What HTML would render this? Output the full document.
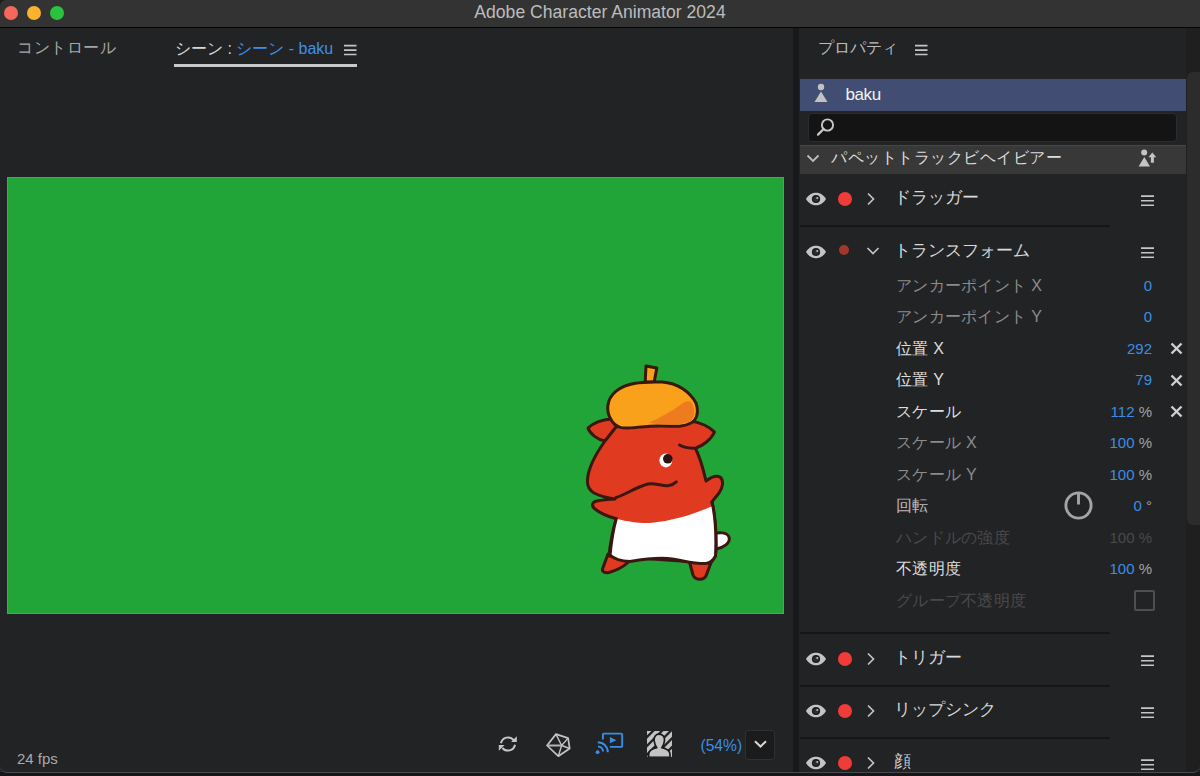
<!DOCTYPE html>
<html lang="ja">
<head>
<meta charset="utf-8">
<style>
*{box-sizing:border-box;margin:0;padding:0}
html,body{width:1200px;height:776px;overflow:hidden;background:#1c1c1e}
body{position:relative;font-family:"Liberation Sans",sans-serif;color:#c8c8c8}
.abs{position:absolute}
#titlebar{left:0;top:0;width:1200px;height:28px;background:#333333;border-bottom:1px solid #060606;border-radius:6px 0 0 0}
#title{left:0;top:0.5px;width:1200px;text-align:center;font-size:17.6px;color:#bcbcbc;line-height:22px}
.tl{top:5.5px;width:14px;height:14px;border-radius:50%}
#left{left:0;top:28px;width:793px;height:745px;background:#222325}
#divider{left:793px;top:28px;width:6px;height:748px;background:#19191a}
#right{left:799px;top:28px;width:387px;height:744px;background:#222325}
#sbtrack{left:1186px;top:28px;width:14px;height:748px;background:#1f1f20}
#sbthumb{left:1187px;top:72px;width:13px;height:453px;background:#2c2c2d;border-radius:6px 0 0 6px}
.tab{font-size:16px;white-space:nowrap}
.ham{width:12px;height:11px}
.ham i{position:absolute;left:0;width:12px;height:1.6px;background:#c6c6c6}
#canvas{left:7px;top:177px;width:777px;height:437px;background:#22a538;box-shadow:inset 1px 1px 0 #31b646,inset -1px -1px 0 #33b848}

.plab{left:896px;font-size:16px;letter-spacing:0.3px;white-space:nowrap;line-height:20px}
.pval{right:48px;font-size:15px;white-space:nowrap;line-height:20px;text-align:right}
.gtitle{left:894px;font-size:16.5px;color:#d9d9d9;white-space:nowrap;line-height:20px}
.sep{left:800px;width:310px;height:2px;background:#161617}
</style>
</head>
<body>
<div id="titlebar" class="abs"></div>
<div class="abs tl" style="left:4px;background:#f5695c"></div>
<div class="abs tl" style="left:27px;background:#fbb22e"></div>
<div class="abs tl" style="left:49.5px;background:#2ac23f"></div>
<div id="title" class="abs">Adobe Character Animator 2024</div>

<div id="left" class="abs"></div>
<div id="divider" class="abs"></div>
<div id="right" class="abs"></div>
<div id="sbtrack" class="abs"></div>
<div id="sbthumb" class="abs"></div>

<!-- left tabs -->
<div class="abs tab" style="left:17px;top:38px;color:#a6a6a6;letter-spacing:0.5px">コントロール</div>
<div class="abs tab" style="left:175px;top:39px;color:#d6d6d6">シーン : <span style="color:#3f8fe6">シーン - baku</span></div>
<svg class="abs" style="left:343.8px;top:40px" width="13" height="20" viewBox="0 0 13 20"><path d="M0 5.6H12.5M0 10.1H12.5M0 14.5H12.5" stroke="#c6c6c6" stroke-width="1.6"/></svg>
<div class="abs" style="left:174px;top:64px;width:183px;height:3px;background:#c9c9c9"></div>

<div id="canvas" class="abs"></div>


<!-- right panel header -->
<div class="abs tab" style="left:818px;top:38px;color:#bdbdbd">プロパティ</div>
<svg class="abs" style="left:914.5px;top:40px" width="13" height="20" viewBox="0 0 13 20"><path d="M0 5.6H12.5M0 10.1H12.5M0 14.5H12.5" stroke="#c6c6c6" stroke-width="1.6"/></svg>
<!-- selected row -->
<div class="abs" style="left:800px;top:79px;width:386px;height:32px;background:#414d72"></div>
<svg class="abs" style="left:813px;top:83px" width="16" height="20" viewBox="0 0 16 20"><circle cx="8" cy="4" r="3.2" fill="#c2c2c2"/><path d="M8 8.5L14.5 19H1.5Z" fill="#c2c2c2"/></svg>
<div class="abs" style="left:845.5px;top:85px;font-size:17px;letter-spacing:-0.4px;color:#f4f4f4;line-height:20px">baku</div>
<!-- search -->
<div class="abs" style="left:808px;top:113px;width:369px;height:29px;background:#141414;border:1px solid #2c2c2c;border-radius:4px"></div>
<svg class="abs" style="left:815px;top:117px" width="22" height="20" viewBox="0 0 22 20"><circle cx="12.5" cy="8" r="5.6" fill="none" stroke="#c8c8c8" stroke-width="1.9"/><path d="M8.6 12L3 17.6" stroke="#c8c8c8" stroke-width="2.2" stroke-linecap="round"/></svg>
<!-- section header -->
<div class="abs" style="left:800px;top:145px;width:386px;height:29px;background:#383838;border-top:1.5px solid #474747"></div>
<svg class="abs" style="left:806px;top:153px" width="14" height="11" viewBox="0 0 14 11"><path d="M1.5 2.5L7 8L12.5 2.5" fill="none" stroke="#bdbdbd" stroke-width="1.8"/></svg>
<div class="abs" style="left:831px;top:148px;font-size:16px;letter-spacing:0.5px;color:#dcdcdc;white-space:nowrap;line-height:20px">パペットトラックビヘイビアー</div>
<svg class="abs" style="left:1137px;top:148px" width="22" height="20" viewBox="0 0 22 20"><circle cx="7.2" cy="4.6" r="3" fill="#c4c4c4"/><path d="M7.3 9L13 18.5H1.6Z" fill="#c4c4c4"/><path d="M15.3 4.4L19.3 9.2H16.9V14.7H13.9V9.2H11.4Z" fill="#c4c4c4"/></svg>
<div class="abs plab" style="top:275.5px;color:#8c8c8c">アンカーポイント X</div>
<div class="abs pval" style="top:275.5px;color:#3b8ee4">0</div>
<div class="abs plab" style="top:307px;color:#8c8c8c">アンカーポイント Y</div>
<div class="abs pval" style="top:307px;color:#3b8ee4">0</div>
<div class="abs plab" style="top:338.5px;color:#dedede">位置 X</div>
<div class="abs pval" style="top:338.5px;color:#3b8ee4">292</div>
<svg class="abs" style="left:1170px;top:342.0px" width="13" height="13" viewBox="0 0 13 13"><path d="M1.5 1.5L11.5 11.5M11.5 1.5L1.5 11.5" stroke="#cfcfcf" stroke-width="2.4"/></svg>
<div class="abs plab" style="top:370px;color:#dedede">位置 Y</div>
<div class="abs pval" style="top:370px;color:#3b8ee4">79</div>
<svg class="abs" style="left:1170px;top:373.5px" width="13" height="13" viewBox="0 0 13 13"><path d="M1.5 1.5L11.5 11.5M11.5 1.5L1.5 11.5" stroke="#cfcfcf" stroke-width="2.4"/></svg>
<div class="abs plab" style="top:401.5px;color:#dedede">スケール</div>
<div class="abs pval" style="top:401.5px;color:#3b8ee4">112 <span style="color:#a3a3a3">%</span></div>
<svg class="abs" style="left:1170px;top:405.0px" width="13" height="13" viewBox="0 0 13 13"><path d="M1.5 1.5L11.5 11.5M11.5 1.5L1.5 11.5" stroke="#cfcfcf" stroke-width="2.4"/></svg>
<div class="abs plab" style="top:433px;color:#8c8c8c">スケール X</div>
<div class="abs pval" style="top:433px;color:#3b8ee4">100 <span style="color:#a3a3a3">%</span></div>
<div class="abs plab" style="top:464.5px;color:#8c8c8c">スケール Y</div>
<div class="abs pval" style="top:464.5px;color:#3b8ee4">100 <span style="color:#a3a3a3">%</span></div>
<div class="abs plab" style="top:496px;color:#bcbcbc">回転</div>
<div class="abs pval" style="top:496px;color:#3b8ee4">0 <span style="color:#a3a3a3">°</span></div>
<div class="abs plab" style="top:527.5px;color:#4a4a4a">ハンドルの強度</div>
<div class="abs pval" style="top:527.5px;color:#4a4a4a">100 <span style="color:#4a4a4a">%</span></div>
<div class="abs plab" style="top:559px;color:#dedede">不透明度</div>
<div class="abs pval" style="top:559px;color:#3b8ee4">100 <span style="color:#a3a3a3">%</span></div>
<div class="abs plab" style="top:590.5px;color:#4a4a4a">グループ不透明度</div>
<svg class="abs" style="left:805px;top:191.5px" width="22" height="14" viewBox="0 0 22 14"><path d="M1 7C4 2.2 7.5 0.8 11 0.8S18 2.2 21 7C18 11.8 14.5 13.2 11 13.2S4 11.8 1 7Z" fill="#c4c4c4"/><circle cx="11" cy="7" r="4.1" fill="#1c1c1c"/><circle cx="11" cy="7" r="2.6" fill="#2e2e2e"/><circle cx="12.3" cy="6" r="1" fill="#c4c4c4"/></svg>
<div class="abs" style="left:838px;top:191.5px;width:14px;height:14px;border-radius:50%;background:#f03b3b"></div>
<svg class="abs" style="left:865px;top:191.5px" width="11" height="14" viewBox="0 0 11 14"><path d="M3 1.5L8.5 7L3 12.5" fill="none" stroke="#c4c4c4" stroke-width="1.7"/></svg>
<div class="abs gtitle" style="top:186.5px">ドラッガー</div>
<svg class="abs" style="left:1141px;top:192.5px" width="13" height="14" viewBox="0 0 13 14"><path d="M0 3.10H13M0 7.80H13M0 12.30H13" stroke="#c6c6c6" stroke-width="1.6"/></svg>
<svg class="abs" style="left:805px;top:651.5px" width="22" height="14" viewBox="0 0 22 14"><path d="M1 7C4 2.2 7.5 0.8 11 0.8S18 2.2 21 7C18 11.8 14.5 13.2 11 13.2S4 11.8 1 7Z" fill="#c4c4c4"/><circle cx="11" cy="7" r="4.1" fill="#1c1c1c"/><circle cx="11" cy="7" r="2.6" fill="#2e2e2e"/><circle cx="12.3" cy="6" r="1" fill="#c4c4c4"/></svg>
<div class="abs" style="left:838px;top:651.5px;width:14px;height:14px;border-radius:50%;background:#f03b3b"></div>
<svg class="abs" style="left:865px;top:651.5px" width="11" height="14" viewBox="0 0 11 14"><path d="M3 1.5L8.5 7L3 12.5" fill="none" stroke="#c4c4c4" stroke-width="1.7"/></svg>
<div class="abs gtitle" style="top:646.5px">トリガー</div>
<svg class="abs" style="left:1141px;top:652.5px" width="13" height="14" viewBox="0 0 13 14"><path d="M0 3.10H13M0 7.80H13M0 12.30H13" stroke="#c6c6c6" stroke-width="1.6"/></svg>
<svg class="abs" style="left:805px;top:703.5px" width="22" height="14" viewBox="0 0 22 14"><path d="M1 7C4 2.2 7.5 0.8 11 0.8S18 2.2 21 7C18 11.8 14.5 13.2 11 13.2S4 11.8 1 7Z" fill="#c4c4c4"/><circle cx="11" cy="7" r="4.1" fill="#1c1c1c"/><circle cx="11" cy="7" r="2.6" fill="#2e2e2e"/><circle cx="12.3" cy="6" r="1" fill="#c4c4c4"/></svg>
<div class="abs" style="left:838px;top:703.5px;width:14px;height:14px;border-radius:50%;background:#f03b3b"></div>
<svg class="abs" style="left:865px;top:703.5px" width="11" height="14" viewBox="0 0 11 14"><path d="M3 1.5L8.5 7L3 12.5" fill="none" stroke="#c4c4c4" stroke-width="1.7"/></svg>
<div class="abs gtitle" style="top:698.5px">リップシンク</div>
<svg class="abs" style="left:1141px;top:704.5px" width="13" height="14" viewBox="0 0 13 14"><path d="M0 3.10H13M0 7.80H13M0 12.30H13" stroke="#c6c6c6" stroke-width="1.6"/></svg>
<svg class="abs" style="left:805px;top:756px" width="22" height="14" viewBox="0 0 22 14"><path d="M1 7C4 2.2 7.5 0.8 11 0.8S18 2.2 21 7C18 11.8 14.5 13.2 11 13.2S4 11.8 1 7Z" fill="#c4c4c4"/><circle cx="11" cy="7" r="4.1" fill="#1c1c1c"/><circle cx="11" cy="7" r="2.6" fill="#2e2e2e"/><circle cx="12.3" cy="6" r="1" fill="#c4c4c4"/></svg>
<div class="abs" style="left:838px;top:756px;width:14px;height:14px;border-radius:50%;background:#f03b3b"></div>
<svg class="abs" style="left:865px;top:756px" width="11" height="14" viewBox="0 0 11 14"><path d="M3 1.5L8.5 7L3 12.5" fill="none" stroke="#c4c4c4" stroke-width="1.7"/></svg>
<div class="abs gtitle" style="top:751.0px">顔</div>
<svg class="abs" style="left:1141px;top:757px" width="13" height="14" viewBox="0 0 13 14"><path d="M0 3.10H13M0 7.80H13M0 12.30H13" stroke="#c6c6c6" stroke-width="1.6"/></svg>
<svg class="abs" style="left:805px;top:244.5px" width="22" height="14" viewBox="0 0 22 14"><path d="M1 7C4 2.2 7.5 0.8 11 0.8S18 2.2 21 7C18 11.8 14.5 13.2 11 13.2S4 11.8 1 7Z" fill="#c4c4c4"/><circle cx="11" cy="7" r="4.1" fill="#1c1c1c"/><circle cx="11" cy="7" r="2.6" fill="#2e2e2e"/><circle cx="12.3" cy="6" r="1" fill="#c4c4c4"/></svg>
<div class="abs" style="left:839px;top:245.3px;width:10px;height:10px;border-radius:50%;background:#a3372a"></div>
<svg class="abs" style="left:866px;top:245.7px" width="14" height="10" viewBox="0 0 14 10"><path d="M1.5 2L7 7.5L12.5 2" fill="none" stroke="#c4c4c4" stroke-width="1.7"/></svg>
<div class="abs gtitle" style="top:239.5px">トランスフォーム</div>
<svg class="abs" style="left:1141px;top:244.8px" width="13" height="14" viewBox="0 0 13 14"><path d="M0 3.10H13M0 7.80H13M0 12.30H13" stroke="#c6c6c6" stroke-width="1.6"/></svg>
<div class="abs sep" style="top:225px"></div>
<div class="abs sep" style="top:632px"></div>
<div class="abs sep" style="top:684.5px"></div>
<div class="abs sep" style="top:736.5px"></div>
<svg class="abs" style="left:1064.3px;top:490.7px" width="29" height="29" viewBox="0 0 29 29"><circle cx="14.5" cy="14.5" r="12.6" fill="none" stroke="#a4a4a4" stroke-width="2.9"/><path d="M14.5 2.5V13.5" stroke="#a4a4a4" stroke-width="2.9"/></svg>
<div class="abs" style="left:1134px;top:590px;width:21px;height:21px;border:2px solid #4f4f4f;border-radius:2px"></div>


<!-- character -->
<svg class="abs" style="left:0;top:0" width="1200" height="776" viewBox="0 0 1200 776">
<g stroke="#3a1711" stroke-width="3" stroke-linejoin="round" stroke-linecap="round">
 <!-- tail -->
 <path d="M714 534C719 532 727 532 729 537C731 543 723 548 716 549Z" fill="#ffffff"/>
 <!-- legs -->
 <path d="M608 554L602.5 569C602 572 605 573 609 572.5C616 570.5 623 567 628 562.5L620 556Z" fill="#e03a20"/>
 <path d="M689 560L693 575C695 580 703 581 706 576L712 560Z" fill="#e03a20"/>
 <!-- left ear -->
 <path d="M612 419C603 419 593 423 588 428C590 434 598 440 605 441L618 428Z" fill="#e03a20"/>
 <!-- body -->
 <path d="M616 420L690 420L695 447.5C699 455 703 468 706 481C710 478 716 475 720 477C724 480 723 488 719 493C716 497 713 500 712 502C715 515 716.5 535 716 552C714 560 712 562 710 563L609 556C610 545 613 530 616.25 518.75C610 517 600 513 595 509C591 506 592 502 597 501C603 500 610 499 615 499C608 498 600 496 594 493C589 490 587 486 587.5 480C588 470 595 455 605 441L616 427Z" fill="#e03a20"/>
 <!-- right ear -->
 <path d="M680 424L690 421C700 422 710 427 714.5 432C711 440 702 446 696 448C690 448.5 684 447.5 679.5 445Z" fill="#e03a20" stroke="none"/>
 <path d="M690 421C700 422 710 427 714.5 432C711 440 702 446 696 448C690 448.5 684 447.5 679.5 445" fill="none"/>
 <!-- shorts -->
 <path d="M616.25 518.75C630 522 640 523.5 650 523C672 521 695 514 712.5 506C715 520 716 540 715.5 556C713 561 710 563 706 563.5C695 564 685 561 672 559C660 557 645 559 630 561.5C620 561 612 558 610 555C611 540 613 530 616.25 518.75Z" fill="#ffffff" stroke="none"/>
 <path d="M610 555C614 559 621 561 630 561.5C645 559 660 557 672 559C685 561 695 564 706 563.5C710 563 713 561 715.5 556" fill="none"/>
 <path d="M616.25 518.75C613 530 611 545 610 555M712 502C715 515 716.5 535 715.5 556" fill="none"/>
 <!-- mouth -->
 <path d="M616 497.5C625 495 636 487 648 484C655 482.5 662 486.5 668 485.8C672 485.2 674.5 483.5 676.3 481.8" fill="none"/>
 <!-- beret -->
 <path d="M646 366L656.8 368L654.2 382L645.2 382Z" fill="#f9a11b"/>
 <path d="M619 427C612 424 607 415 607.8 406C609 394 620 386 634 383.5C645 381.5 652 382 662 382C678 383 690 392 696 403C699 412 697 420 691 423C684 427 676 426.5 662 426C648 425.5 635 428 626 428C622 428 620 427.5 619 427Z" fill="#f9a11b"/>
</g>
<path d="M649 422.5C660 418 672 411 680 405C684 402 688 400 691 402C695 407 695.5 415 691.5 420.5C686 424.5 676 424.5 662 424.5C657 424 652 423.5 649 422.5Z" fill="#ee7b1e"/>
<!-- eye -->
<ellipse cx="665.8" cy="460.4" rx="6.4" ry="7" fill="#ffffff"/>
<circle cx="667.8" cy="458.8" r="4.8" fill="#2a1410"/>
</svg>
<!-- bottom toolbar -->
<div class="abs" style="left:17px;top:750px;font-size:15px;color:#a9a9a9;line-height:18px">24 fps</div>
<svg class="abs" style="left:496px;top:733px" width="24" height="22" viewBox="0 0 24 22">
 <path d="M5 10.2A7.1 7.1 0 0 1 17.6 7.2" fill="none" stroke="#c6c6c6" stroke-width="2"/>
 <path d="M20.8 3.2V8.9H15.1Z" fill="#c6c6c6"/>
 <path d="M19 11.8A7.1 7.1 0 0 1 6.4 14.8" fill="none" stroke="#c6c6c6" stroke-width="2"/>
 <path d="M2.8 17.8V12.1H8.5Z" fill="#c6c6c6"/>
</svg>
<svg class="abs" style="left:545px;top:732px" width="27" height="26" viewBox="0 0 27 26">
 <path d="M11 2.1L23.1 6.1L24.7 16.5L13.3 24.2L2 13.5Z" fill="none" stroke="#c4c4c4" stroke-width="1.7" stroke-linejoin="round"/>
 <path d="M11 2.1L16.6 13.5L23.1 6.1M16.6 13.5L13.3 24.2M16.6 13.5L24.7 16.5" fill="none" stroke="#c4c4c4" stroke-width="1.4"/>
 <path d="M2 13.5H16.6" fill="none" stroke="#b4b4b4" stroke-width="2"/>
</svg>
<svg class="abs" style="left:594px;top:731px" width="32" height="25" viewBox="0 0 32 25">
 <path d="M8.9 8.6V3.6Q8.9 2.6 9.9 2.6H27.2Q28.2 2.6 28.2 3.6V14.9Q28.2 15.9 27.2 15.9H15.9" fill="none" stroke="#3b8ee4" stroke-width="1.9"/>
 <path d="M15.9 6.1L22.4 9.2L15.9 12.3Z" fill="#3b8ee4"/>
 <circle cx="3.6" cy="21.2" r="1.9" fill="#3b8ee4"/>
 <path d="M4 15.6A5 5 0 0 1 9 20.6" fill="none" stroke="#3b8ee4" stroke-width="2"/>
 <path d="M3.8 11.2A10 10 0 0 1 13.8 21.2" fill="none" stroke="#3b8ee4" stroke-width="2"/>
</svg>
<svg class="abs" style="left:646px;top:730px" width="27" height="28" viewBox="0 0 27 28">
 <rect x="1" y="1" width="25" height="26" fill="#c4c4c4"/>
 <path d="M-2 10L10 -2M-2 18.8L18.8 -2M-2 27.6L27.6 -2M6 28.4L28.4 6M14.8 28.4L28.4 14.8" stroke="#222325" stroke-width="2.3"/>
 <path d="M13.1 4.2C9.6 4.2 7.9 7 8.1 10.5C8.3 13.5 9.6 15.8 10.6 17.6C6.2 18.6 2.6 21 2.6 24.5V27.3H24V24.5C24 21 20.4 18.6 16 17.6C17 15.8 18.3 13.5 18.5 10.5C18.7 7 17 4.2 13.1 4.2Z" fill="#c4c4c4" stroke="#1a1a1b" stroke-width="1.7"/>
 <rect x="0" y="26.9" width="27" height="2" fill="#222325"/>
</svg>
<div class="abs" style="left:700.5px;top:736.8px;font-size:15.6px;color:#3b8ee4;line-height:18px">(54%)</div>
<div class="abs" style="left:745px;top:730px;width:30px;height:30px;background:#1b1b1c;border:1px solid #303030;border-radius:3px"></div>
<svg class="abs" style="left:753px;top:739px" width="15" height="10" viewBox="0 0 15 10"><path d="M2 2.2L7.5 7.5L13 2.2" fill="none" stroke="#d6d6d6" stroke-width="2"/></svg>
<!-- window bottom edge -->
<div class="abs" style="left:0;top:772px;width:1200px;height:4px;background:#14161c"></div>
<div class="abs" style="left:0;top:760px;width:1200px;height:13px;border-bottom:1px solid #4a4a4a;border-radius:0 0 7px 7px;"></div>
</body>
</html>
